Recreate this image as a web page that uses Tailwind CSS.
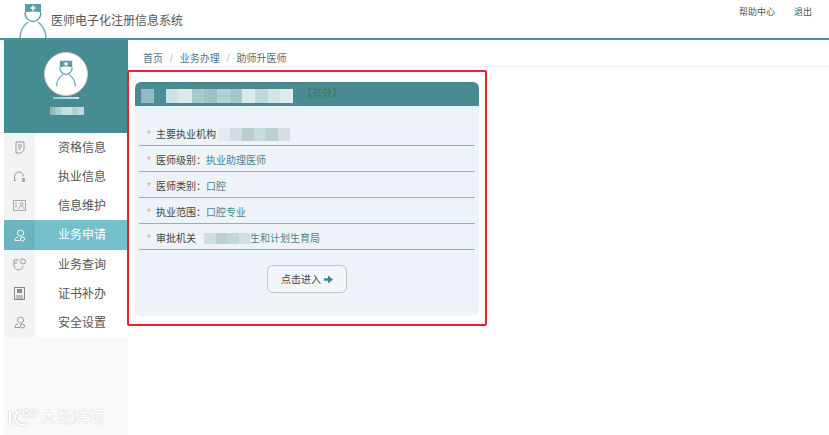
<!DOCTYPE html>
<html lang="zh-CN">
<head>
  <meta charset="UTF-8" />
  <title>医师电子化注册信息系统</title>
  <script src="https://cdn.jsdelivr.net/npm/@tailwindcss/browser@4"></script>
</head>
<body class="relative w-[829px] h-[435px] overflow-hidden bg-white text-[#444] font-['Liberation_Sans','Noto_Sans_CJK_SC',sans-serif]">

  <!-- top bar -->
  <header class="h-[40px] border-b-2 border-[#4f8f96] flex items-start pl-[18px] pr-[17px]">
    <svg class="w-[30px] h-[36px] mt-[3px]" viewBox="0 0 30 36" fill="none">
      <path d="M7 1h16v8.500c-5-1.500-11-1.500-16 0z" fill="#5a9ea6"/>
      <path d="M15 2.500v5M12.500 5h5" stroke="#fff" stroke-width="1.600"/>
      <path d="M7 9.500c0 5 3.500 9 8 9s8-4 8-9" stroke="#5a9ea6" stroke-width="1.500"/>
      <path d="M2 35c0-8 3-12 8-16M28 35c0-8-3-12-8-16" stroke="#6db0b8" stroke-width="1.500"/>
    </svg>
    <h1 class="ml-[3px] mt-[13px] text-[12px] leading-[16px] text-[#555]">医师电子化注册信息系统</h1>
    <nav class="ml-auto mt-[6px] flex gap-[19px] text-[9px] leading-[13px] text-[#555]">
      <span>帮助中心</span>
      <span>退出</span>
    </nav>
  </header>

  <div class="flex h-[395px]">
    <!-- sidebar -->
    <aside class="ml-[4px] w-[124px] bg-[#f9f9f9] flex flex-col">
      <div class="h-[93px] bg-[#468c93] flex flex-col items-center pt-[12px]">
        <div class="w-[44px] h-[44px] rounded-full bg-white border border-[#e3c6bc] flex items-center justify-center">
          <svg class="w-[24px] h-[28px]" viewBox="0 0 30 36" fill="none">
            <path d="M7 1h16v8.500c-5-1.500-11-1.500-16 0z" fill="#5a9ea6"/>
            <path d="M15 2.500v5M12.500 5h5" stroke="#fff" stroke-width="1.800"/>
            <path d="M7 9.500c0 5 3.500 9 8 9s8-4 8-9" stroke="#5a9ea6" stroke-width="1.600"/>
            <path d="M3 34c0-8 3-12 8-15M27 34c0-8-3-12-8-15" stroke="#6db0b8" stroke-width="1.600"/>
          </svg>
        </div>
        <div class="mt-[1px] w-[26px] h-[2px] bg-gradient-to-r from-[#9cc3c6] to-[#d9e8e9]"></div>
        <div class="mt-[8px] flex h-[8px] w-[34px] ml-[1px]">
          <i class="flex-1 bg-[#8fb9bd]"></i><i class="flex-1 bg-[#a9cbce]"></i><i class="flex-1 bg-[#c4dcde]"></i><i class="flex-1 bg-[#c9dfe1]"></i><i class="flex-1 bg-[#aecfd1]"></i><i class="flex-1 bg-[#c2dadc]"></i>
        </div>
      </div>
      <ul class="text-[12px] text-[#555]">
        <li class="h-[29px] flex items-center bg-white">
          <span class="w-[31px] h-full bg-[#f3f3f3] flex items-center justify-center">
            <svg class="w-[12px] h-[13px]" viewBox="0 0 12 13" fill="none" stroke="#999"><path d="M2 1h8v8l-3 3H2zM4 4h4M4 6h4M4 8h3"/></svg>
          </span>
          <span class="ml-[23px]">资格信息</span>
        </li>
        <li class="h-[29px] flex items-center bg-white">
          <span class="w-[31px] h-full bg-[#f3f3f3] flex items-center justify-center">
            <svg class="w-[13px] h-[13px]" viewBox="0 0 13 13" fill="none" stroke="#999"><path d="M1.500 10.500v-4a4.500 4.500 0 0 1 9 0"/><path d="M1 10.500h2"/><rect x="9" y="8" width="3" height="4" fill="#aaa" stroke="none"/></svg>
          </span>
          <span class="ml-[23px]">执业信息</span>
        </li>
        <li class="h-[29px] flex items-center bg-white">
          <span class="w-[31px] h-full bg-[#f3f3f3] flex items-center justify-center">
            <svg class="w-[13px] h-[11px]" viewBox="0 0 13 11" fill="none" stroke="#999" stroke-width=".8"><rect x=".5" y=".5" width="12" height="10"/><circle cx="8.500" cy="4" r="1.500"/><path d="M6 9c0-2 1-3 2.500-3S11 7 11 9M2 3h2M2 5h2M2 7h2"/></svg>
          </span>
          <span class="ml-[23px]">信息维护</span>
        </li>
        <li class="h-[30px] flex items-center bg-[#74c0cc] text-white">
          <span class="w-[31px] h-full bg-[#6cb4bf] flex items-center justify-center">
            <svg class="w-[12px] h-[13px]" viewBox="0 0 12 13" fill="none" stroke="#fff"><path d="M4 8c-2 .5-3 1.500-3 3.500h5M3.500 4a3 3 0 0 1 6 0c0 1.500-1 3-3 3s-3-1.500-3-3z"/><circle cx="8.500" cy="10" r="2"/></svg>
          </span>
          <span class="ml-[23px]">业务申请</span>
        </li>
        <li class="h-[29px] flex items-center bg-white">
          <span class="w-[31px] h-full bg-[#f3f3f3] flex items-center justify-center">
            <svg class="w-[14px] h-[13px]" viewBox="0 0 14 13" fill="none" stroke="#999"><path d="M6 2H1v5c0 3 2 5 4.500 5S10 10 10 8"/><circle cx="10" cy="3.500" r="2.500"/><path d="M1 5h3"/></svg>
          </span>
          <span class="ml-[23px]">业务查询</span>
        </li>
        <li class="h-[29px] flex items-center bg-white">
          <span class="w-[31px] h-full bg-[#f3f3f3] flex items-center justify-center">
            <svg class="w-[11px] h-[13px]" viewBox="0 0 11 13" fill="none" stroke="#888"><rect x=".5" y=".5" width="10" height="12"/><rect x="3" y="2" width="5" height="4" fill="#888" stroke="none"/><path d="M2 9h7M2 11h7"/></svg>
          </span>
          <span class="ml-[23px]">证书补办</span>
        </li>
        <li class="h-[29px] flex items-center bg-white">
          <span class="w-[31px] h-full bg-[#f3f3f3] flex items-center justify-center">
            <svg class="w-[12px] h-[13px]" viewBox="0 0 12 13" fill="none" stroke="#999"><path d="M4 8c-2 .5-3 1.500-3 3.500h5M3.500 4a3 3 0 0 1 6 0c0 1.500-1 3-3 3s-3-1.500-3-3z"/><circle cx="8.500" cy="10" r="2"/></svg>
          </span>
          <span class="ml-[23px]">安全设置</span>
        </li>
      </ul>
    </aside>

    <!-- main -->
    <main class="flex-1 min-w-0">
      <div class="h-[27px] border-b border-[#f0f0f0] pl-[15px] pt-[12px] flex items-start text-[10px] leading-[14px] gap-[7px]">
        <span class="text-[#4c7191]">首页</span><span class="text-[#bbb]">/</span><span class="text-[#4c7191]">业务办理</span><span class="text-[#bbb]">/</span><span class="text-[#666]">助师升医师</span>
      </div>
      <!-- red annotation box around the card -->
      <div class="ml-[-1px] mt-[3px] w-[360px] h-[256px] border-2 border-[#e5262b] rounded-[2px] pt-[10px] pl-[6px]">
        <section class="w-[344px] h-[234px] rounded-[6px] bg-[#edf3f9] overflow-hidden">
          <div class="relative h-[24px] bg-[#4a8b92] text-[10px] leading-[24px] pl-[167px] text-[#3d7a5a]">【有效】
            <div class="absolute left-[6px] top-[7px] flex h-[14px] w-[152px]">
              <i class="flex-1 bg-[#8fbcc0]"></i><i class="flex-1 bg-[#4a8f97]"></i><i class="flex-1 bg-[#cfe2e3]"></i><i class="flex-1 bg-[#dbe9ea]"></i><i class="flex-1 bg-[#a7cacc]"></i><i class="flex-1 bg-[#9cc2c5]"></i><i class="flex-1 bg-[#b5d2d4]"></i><i class="flex-1 bg-[#a3c7ca]"></i><i class="flex-1 bg-[#dbe9ea]"></i><i class="flex-1 bg-[#c0d9db]"></i><i class="flex-1 bg-[#d5e5e7]"></i><i class="flex-1 bg-[#e0ecec]"></i>
            </div>
          </div>
          <ul class="pt-[14px] px-[4px] text-[10px] text-[#444]">
            <li class="relative h-[26px] border-b border-[#8db5ba] flex items-center pl-[17px] pt-[4px] before:content-['*'] before:absolute before:left-[8px] before:text-[#e0a0a0]">
              <span>主要执业机构</span>
              <div class="ml-[2px] flex h-[13px] w-[72px]">
                <i class="flex-1 bg-[#e3ebf1]"></i><i class="flex-1 bg-[#d0dee4]"></i><i class="flex-1 bg-[#b7ced3]"></i><i class="flex-1 bg-[#c9dadf]"></i><i class="flex-1 bg-[#bbd0d6]"></i><i class="flex-1 bg-[#d2e0e5]"></i>
              </div>
            </li>
            <li class="relative h-[26px] border-b border-[#8db5ba] flex items-center pl-[17px] pt-[4px] before:content-['*'] before:absolute before:left-[8px] before:text-[#e0a0a0]">
              <span>医师级别：</span><span class="text-[#4a8590]">执业助理医师</span>
            </li>
            <li class="relative h-[26px] border-b border-[#8db5ba] flex items-center pl-[17px] pt-[4px] before:content-['*'] before:absolute before:left-[8px] before:text-[#e0a0a0]">
              <span>医师类别：</span><span class="text-[#4a8590]">口腔</span>
            </li>
            <li class="relative h-[26px] border-b border-[#8db5ba] flex items-center pl-[17px] pt-[4px] before:content-['*'] before:absolute before:left-[8px] before:text-[#e0a0a0]">
              <span>执业范围：</span><span class="text-[#4a8590]">口腔专业</span>
            </li>
            <li class="relative h-[26px] border-b border-[#8db5ba] flex items-center pl-[17px] pt-[4px] before:content-['*'] before:absolute before:left-[8px] before:text-[#e0a0a0]">
              <span>审批机关</span>
              <div class="ml-[8px] flex h-[11px] w-[46px]">
                <i class="flex-1 bg-[#cfdee4]"></i><i class="flex-1 bg-[#bbd0d6]"></i><i class="flex-1 bg-[#c3d6db]"></i><i class="flex-1 bg-[#d0dfe4]"></i>
              </div>
              <span class="text-[#4a8590]">生和计划生育局</span>
            </li>
          </ul>
          <div class="flex justify-center pt-[15px]">
            <button class="w-[80px] h-[28px] rounded-[6px] border border-[#b9c6ce] bg-[#f2f6f9] text-[10px] text-[#444] flex items-center justify-center gap-[3px]">
              点击进入
              <svg class="w-[9px] h-[9px]" viewBox="0 0 9 9" fill="#3c8a92"><path d="M0 3.200h4V.6l5 3.900-5 3.900V5.800H0z"/></svg>
            </button>
          </div>
        </section>
      </div>
    </main>
  </div>

  <!-- watermark over the sidebar -->
  <div class="absolute left-[8px] top-[408px] flex items-center text-[#fff] [text-shadow:0_0_1px_#bbb]">
    <svg class="w-[32px] h-[20px]" viewBox="0 0 32 20" fill="none" stroke="#fff" stroke-width="2" style="filter:drop-shadow(0 0 1px #bbb)">
      <path d="M2 3v14M12 3C7 5 6 9 8 13s7 5 10 3"/><circle cx="18" cy="5" r="3" stroke-width="1.200"/><circle cx="25" cy="5" r="3" stroke-width="1.200"/>
    </svg>
    <span class="ml-[1px] text-[16px] leading-[20px]">大数跨境</span>
  </div>
</body>
</html>
